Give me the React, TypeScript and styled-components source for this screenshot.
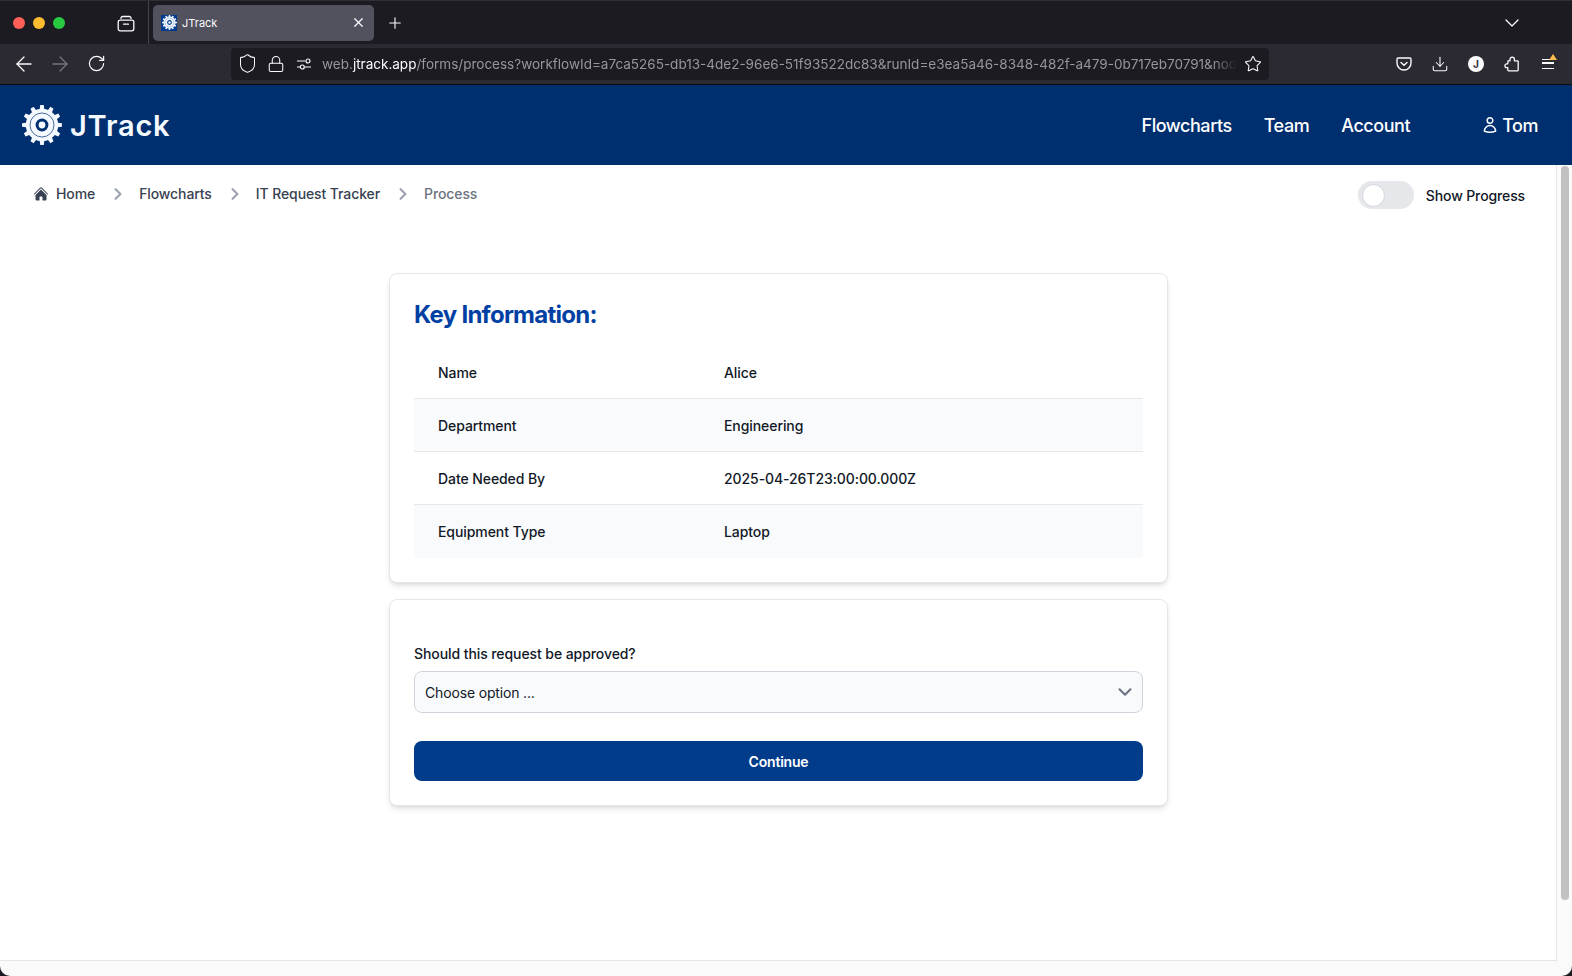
import React from "react";
import styled, { createGlobalStyle } from "styled-components";
import { ArrowLeft, ArrowRight, ChevronDown, Download, Lock, Plus, RotateCw, Shield, Star, X } from "lucide-react";
import { HiHome, HiOutlineUser } from "react-icons/hi2";

const GlobalStyle = createGlobalStyle`
  html, body {
    margin: 0;
    padding: 0;
    background: #1c1b22;
    overflow: hidden;
  }
  * {
    box-sizing: border-box;
  }
`;

const Frame = styled.div`
  width: 1572px;
  height: 976px;
  display: flex;
  flex-direction: column;
  overflow: hidden;
  border-radius: 0 0 10px 10px;
  background: #fafafa;
  font-family: Inter, "Liberation Sans", sans-serif;
`;

const TabStrip = styled.div`
  height: 44px;
  flex: none;
  display: flex;
  align-items: center;
  padding-left: 13px;
  background: #1c1b22;
  border-top: 1px solid #2f2e36;
`;

const Lights = styled.div`
  display: flex;
  gap: 8px;
  width: 102px;
`;

const Light = styled.span<{ $color: string }>`
  width: 12px;
  height: 12px;
  border-radius: 50%;
  background: ${(p) => p.$color};
`;

const ChromeIcon = styled.span<{ $width?: number; $dim?: boolean }>`
  width: ${(p) => p.$width ?? 36}px;
  flex: none;
  display: flex;
  align-items: center;
  justify-content: center;
  color: ${(p) => (p.$dim ? "#77767c" : "#fbfbfe")};
`;

const Divider = styled.span`
  width: 1px;
  height: 44px;
  margin: 0 4px 0 4px;
  background: #45444b;
`;

const Tab = styled.div`
  width: 221px;
  height: 36px;
  display: flex;
  align-items: center;
  padding: 0 8px 0 8px;
  border-radius: 5px;
  background: #52525e;
  color: #fbfbfe;
  font-size: 11px;
`;

const Favicon = styled.span`
  width: 16px;
  height: 16px;
  margin-right: 5px;
  display: flex;
  align-items: center;
  justify-content: center;
  background: #003b8e;
`;

const TabTitle = styled.span`
  flex: 1;
`;

const TabSpacer = styled.span`
  flex: 1;
`;

const Toolbar = styled.div`
  height: 41px;
  flex: none;
  display: flex;
  align-items: center;
  padding: 0 0 1px 6px;
  background: #2b2a33;
  border-bottom: 1px solid #0c0c0f;
`;

const UrlBar = styled.div`
  width: 1038px;
  height: 32px;
  margin-left: 117px;
  display: flex;
  align-items: center;
  border-radius: 4px;
  background: #1c1b22;
  flex: none;
  padding-left: 2px;
`;

const UrlText = styled.div`
  flex: 1;
  min-width: 0;
  margin-left: 4px;
  overflow: hidden;
  white-space: nowrap;
  font-size: 13.53px;
  color: #97969c;
  mask-image: linear-gradient(to left, transparent 0, #000 24px);
`;

const UrlHost = styled.span`
  color: #fbfbfe;
`;

const ToolbarIcons = styled.div`
  display: flex;
  align-items: center;
  margin-left: -1px;
`;

const Badge = styled.span`
  position: absolute;
  top: -5px;
  right: -3px;
  width: 0;
  height: 0;
  border-left: 4px solid transparent;
  border-right: 4px solid transparent;
  border-bottom: 6px solid #ffbd4f;
`;

const MenuLines = styled.span`
  width: 12px;
  height: 10px;
  display: block;
  border-top: 1.5px solid #fbfbfe;
  border-bottom: 1.5px solid #fbfbfe;
  &::after {
    content: "";
    display: block;
    height: 1.5px;
    margin-top: 2.75px;
    background: #fbfbfe;
  }
`;

const MenuIcon = styled.span`
  position: relative;
  display: block;
`;

const Account = styled.span`
  width: 16px;
  height: 16px;
  border-radius: 50%;
  display: flex;
  align-items: center;
  justify-content: center;
  background: #fbfbfe;
  color: #2b2a33;
  font-size: 10px;
  font-weight: 700;
`;

const Header = styled.header`
  height: 80px;
  flex: none;
  display: flex;
  align-items: center;
  padding: 0 34px 0 22px;
  background: #002f70;
  color: #fff;
`;

const Brand = styled.div`
  display: flex;
  align-items: center;
  gap: 8px;
  flex: 1;
`;

const BrandName = styled.span`
  font-size: 29px;
  font-weight: 600;
  letter-spacing: 0.8px;
  color: #f4f9ff;
`;

const Nav = styled.nav`
  display: flex;
  align-items: center;
  gap: 32px;
  font-size: 18px;
  font-weight: 500;
  letter-spacing: -0.45px;
`;

const UserLink = styled.span`
  display: flex;
  align-items: center;
  gap: 3px;
  margin-left: 39px;
`;

const Body = styled.div`
  flex: 1;
  min-height: 0;
  display: grid;
  grid-template-columns: 1fr 15px;
  grid-template-rows: 1fr 15px;
`;

const Page = styled.main`
  background: #fff;
  border-right: 1px solid #e5e5e5;
  border-bottom: 1px solid #e5e5e5;
  overflow: hidden;
  padding: 16px 31px 0 33px;
`;

const ScrollGutter = styled.div`
  padding: 1px 3px 61px 4px;
`;

const ScrollThumb = styled.div`
  height: 100%;
  border-radius: 4px;
  background: #c1c1c1;
`;

const TopRow = styled.div`
  display: flex;
  justify-content: space-between;
`;

const Crumbs = styled.ol`
  display: flex;
  align-items: center;
  height: 25px;
  margin: 0;
  padding: 0;
  list-style: none;
  font-size: 14px;
  font-weight: 500;
  letter-spacing: -0.1px;
  color: #374151;
`;

const Crumb = styled.li<{ $current?: boolean }>`
  display: flex;
  align-items: center;
  color: ${(p) => (p.$current ? "#6b7280" : "#374151")};
`;

const HomeIcon = styled(HiHome)`
  width: 16px;
  height: 16px;
  margin-right: 7px;
`;

const CrumbArrow = styled.svg`
  width: 8px;
  height: 12px;
  margin: 0 17px 0 19px;
  color: #9ca3af;
`;

const ProgressToggle = styled.div`
  display: flex;
  align-items: center;
  gap: 12px;
  height: 28px;
  font-size: 14px;
  font-weight: 500;
  letter-spacing: -0.12px;
  color: #111827;
`;

const Track = styled.span`
  width: 56px;
  height: 28px;
  padding: 2.5px 4.5px;
  border-radius: 14px;
  background: #e5e7eb;
`;

const Knob = styled.span`
  display: block;
  width: 23px;
  height: 23px;
  border-radius: 50%;
  background: #fff;
  border: 1px solid #d1d5db;
`;

const Column = styled.div`
  width: 779px;
  margin: 64px 0 0 356px;
  display: flex;
  flex-direction: column;
  gap: 16px;
  letter-spacing: -0.08px;
`;

const Card = styled.section`
  padding: 24px;
  background: #fff;
  border: 1px solid #e5e7eb;
  border-radius: 8px;
  box-shadow: 0 4px 6px -1px rgba(0, 0, 0, 0.1), 0 2px 4px -2px rgba(0, 0, 0, 0.1);
`;

const Title = styled.h2`
  margin: 1px 0 15px;
  font-size: 24px;
  line-height: 32px;
  font-weight: 700;
  letter-spacing: -0.73px;
  color: #003fa3;
`;

const InfoTable = styled.div`
  font-size: 14px;
  color: #111827;
`;

const InfoRow = styled.div<{ $even: boolean; $last: boolean }>`
  height: 53px;
  display: grid;
  grid-template-columns: 286px 1fr;
  align-items: center;
  padding-left: 24px;
  font-weight: 500;
  background: ${(p) => (p.$even ? "#f9fafb" : "#fff")};
  border-bottom: ${(p) => (p.$last ? "none" : "1px solid #e5e7eb")};
`;

const FieldLabel = styled.label`
  display: block;
  margin: 20px 0 7px;
  font-size: 14px;
  line-height: 20px;
  font-weight: 500;
  color: #111827;
`;

const SelectBox = styled.div`
  height: 42px;
  display: flex;
  align-items: center;
  justify-content: space-between;
  padding: 0 6px 0 10px;
  border: 1px solid #d1d5db;
  border-radius: 8px;
  background: #f9fafb;
  font-size: 14px;
  letter-spacing: -0.16px;
  color: #111827;
  svg {
    color: #6b7280;
  }
`;

const ContinueButton = styled.button`
  width: 100%;
  height: 40px;
  margin-top: 28px;
  display: block;
  border: 0;
  border-radius: 8px;
  background: #003c8a;
  color: #fff;
  font-family: inherit;
  font-size: 14px;
  font-weight: 600;
  letter-spacing: -0.2px;
`;

const gearPoints = (() => {
  const teeth = 12;
  const pts: string[] = [];
  for (let i = 0; i < teeth; i++) {
    const a = (i / teeth) * Math.PI * 2;
    const step = (Math.PI * 2) / teeth;
    const corners: [number, number][] = [
      [16.2, -0.5 * step],
      [16.2, -0.27 * step],
      [20, -0.17 * step],
      [20, 0.17 * step],
      [16.2, 0.27 * step],
    ];
    corners.forEach(([r, d]) => {
      pts.push(`${(r * Math.cos(a + d)).toFixed(2)},${(r * Math.sin(a + d)).toFixed(2)}`);
    });
  }
  return pts.join(" ");
})();

function Gear({ size, bg }: { size: number; bg: string }) {
  return (
    <svg width={size} height={size} viewBox="-20 -20 40 40">
      <polygon points={gearPoints} fill="#f4f9ff" />
      <circle r="12" fill="none" stroke={bg} strokeWidth="0.7" />
      <circle r="6.4" fill={bg} />
      <circle r="3.4" fill="#f4f9ff" />
    </svg>
  );
}

function FirefoxView() {
  return (
    <svg width="18" height="18" viewBox="0 0 18 18" fill="none" stroke="#fbfbfe" strokeWidth="1.3">
      <rect x="1.2" y="6.2" width="15.6" height="10.6" rx="2" />
      <path d="M4 4.400v-.2a1.700 1.700 0 0 1 1.700-1.700h6.600a1.700 1.700 0 0 1 1.700 1.700v.2M6.500 10.200h5" strokeLinecap="round" />
    </svg>
  );
}

function SiteSliders() {
  return (
    <svg width="16" height="16" viewBox="0 0 16 16" fill="none" stroke="#fbfbfe" strokeWidth="1.2">
      <path d="M1 5h8M1 11h3M9 11h6" />
      <circle cx="12" cy="5" r="2" />
      <circle cx="6.3" cy="11" r="2" />
    </svg>
  );
}

function Pocket() {
  return (
    <svg width="16" height="16" viewBox="0 0 16 16" fill="none" stroke="#fbfbfe" strokeWidth="1.4">
      <path d="M2.200 2h11.600c.7 0 1.200.5 1.200 1.200V7a7 7 0 0 1-14 0V3.200C1 2.500 1.500 2 2.200 2z" />
      <path d="M5 6.500l3 2.800 3-2.800" strokeLinecap="round" strokeLinejoin="round" />
    </svg>
  );
}

function Extensions() {
  return (
    <svg width="16" height="16" viewBox="0 0 16 16" fill="none" stroke="#fbfbfe" strokeWidth="1.3" strokeLinejoin="round">
      <path d="M4 4.800H6V3.300a2.200 2.200 0 0 1 4.400 0v1.500h3.100c.4 0 .7.3.7.7v8.600c0 .4-.3.7-.7.7H4.500c-.4 0-.7-.3-.7-.7v-2.500H2.800a1.900 1.900 0 0 1 0-3.800h1z" />
    </svg>
  );
}

const rows = [
  ["Name", "Alice"],
  ["Department", "Engineering"],
  ["Date Needed By", "2025-04-26T23:00:00.000Z"],
  ["Equipment Type", "Laptop"],
];

const crumbs = ["Home", "Flowcharts", "IT Request Tracker", "Process"];

const url = "/forms/process?workflowId=a7ca5265-db13-4de2-96e6-51f93522dc83&runId=e3ea5a46-8348-482f-a479-0b717eb70791&nod";

export default function App() {
  return (
    <Frame>
      <GlobalStyle />
      <TabStrip>
        <Lights>
          <Light $color="#ff5f57" />
          <Light $color="#febc2e" />
          <Light $color="#28c840" />
        </Lights>
        <ChromeIcon $width={22}>
          <FirefoxView />
        </ChromeIcon>
        <ChromeIcon $width={7} />
        <Divider />
        <Tab>
          <Favicon>
            <Gear size={15} bg="#003b8e" />
          </Favicon>
          <TabTitle>JTrack</TabTitle>
          <X size={15} color="#fbfbfe" />
        </Tab>
        <ChromeIcon $width={42}>
          <Plus size={18} strokeWidth={1.5} />
        </ChromeIcon>
        <TabSpacer />
        <ChromeIcon $width={44}>
          <ChevronDown size={24} strokeWidth={1.3} />
        </ChromeIcon>
        <ChromeIcon $width={38} />
      </TabStrip>
      <Toolbar>
        <ChromeIcon>
          <ArrowLeft size={24} strokeWidth={1.3} />
        </ChromeIcon>
        <ChromeIcon $dim>
          <ArrowRight size={24} strokeWidth={1.3} />
        </ChromeIcon>
        <ChromeIcon>
          <RotateCw size={19} strokeWidth={1.5} />
        </ChromeIcon>
        <UrlBar>
          <ChromeIcon $width={28}>
            <Shield size={21} strokeWidth={1.15} />
          </ChromeIcon>
          <ChromeIcon $width={29}>
            <Lock size={18} strokeWidth={1.4} />
          </ChromeIcon>
          <ChromeIcon $width={28}>
            <SiteSliders />
          </ChromeIcon>
          <UrlText>
            web.<UrlHost>jtrack.app</UrlHost>
            {url}
          </UrlText>
          <ChromeIcon $width={32}>
            <Star size={18} strokeWidth={1.4} />
          </ChromeIcon>
        </UrlBar>
        <ToolbarIcons>
          <ChromeIcon $width={118} />
          <ChromeIcon>
            <Pocket />
          </ChromeIcon>
          <ChromeIcon>
            <Download size={18} strokeWidth={1.4} />
          </ChromeIcon>
          <ChromeIcon>
            <Account>J</Account>
          </ChromeIcon>
          <ChromeIcon>
            <Extensions />
          </ChromeIcon>
          <ChromeIcon>
            <MenuIcon>
              <MenuLines />
              <Badge />
            </MenuIcon>
          </ChromeIcon>
        </ToolbarIcons>
      </Toolbar>
      <Header>
        <Brand>
          <Gear size={40} bg="#002f70" />
          <BrandName>JTrack</BrandName>
        </Brand>
        <Nav>
          <span>Flowcharts</span>
          <span>Team</span>
          <span>Account</span>
          <UserLink>
            <HiOutlineUser size={18} strokeWidth={2} />
            Tom
          </UserLink>
        </Nav>
      </Header>
      <Body>
        <Page>
          <TopRow>
            <Crumbs>
              {crumbs.map((c, i) => (
                <Crumb key={c} $current={i === crumbs.length - 1}>
                  {i === 0 ? <HomeIcon /> : null}
                  {c}
                  {i < crumbs.length - 1 ? (
                    <CrumbArrow viewBox="0 0 6 10" fill="none">
                      <path d="m1 9 4-4-4-4" stroke="currentColor" strokeWidth="1.8" strokeLinecap="round" strokeLinejoin="round" />
                    </CrumbArrow>
                  ) : null}
                </Crumb>
              ))}
            </Crumbs>
            <ProgressToggle>
              <Track>
                <Knob />
              </Track>
              Show Progress
            </ProgressToggle>
          </TopRow>
          <Column>
            <Card>
              <Title>Key Information:</Title>
              <InfoTable>
                {rows.map(([k, v], i) => (
                  <InfoRow key={k} $even={i % 2 === 1} $last={i === rows.length - 1}>
                    <span>{k}</span>
                    <span>{v}</span>
                  </InfoRow>
                ))}
              </InfoTable>
            </Card>
            <Card>
              <FieldLabel>Should this request be approved?</FieldLabel>
              <SelectBox>
                Choose option ...
                <ChevronDown size={22} strokeWidth={2.3} />
              </SelectBox>
              <ContinueButton>Continue</ContinueButton>
            </Card>
          </Column>
        </Page>
        <ScrollGutter>
          <ScrollThumb />
        </ScrollGutter>
      </Body>
    </Frame>
  );
}
